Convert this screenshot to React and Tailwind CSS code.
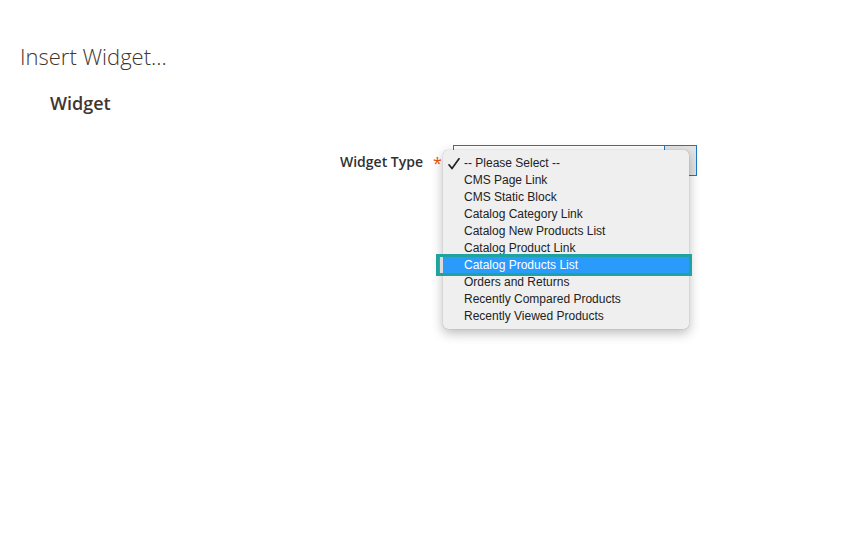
import React from "react";

const items = [
  "-- Please Select --",
  "CMS Page Link",
  "CMS Static Block",
  "Catalog Category Link",
  "Catalog New Products List",
  "Catalog Product Link",
  "Catalog Products List",
  "Orders and Returns",
  "Recently Compared Products",
  "Recently Viewed Products",
];

export default function App() {
  return (
    <div
      className="w-[851px] h-[545px] bg-white overflow-hidden"
      style={{ fontFamily: '"Open Sans", sans-serif' }}
    >
      <h1 className="pl-[20px] pt-[41px] text-[22px] leading-[30px] font-light text-[#41362f]">
        Insert Widget...
      </h1>
      <h2 className="pl-[50px] mt-[20px] text-[18px] leading-[24px] font-semibold text-[#41362f]">
        Widget
      </h2>
      <div className="mt-[30px] flex items-center">
        <label className="w-[423px] text-right text-[14px] leading-[20px] font-semibold text-[#303030] pt-[2px]">
          Widget Type
        </label>
        <span className="ml-[10px] w-[20px] text-[16px] leading-[20px] text-[#eb5202] pt-[4px]">*</span>
        <div className="relative flex w-[244px] h-[31px] border border-[#1979c3] bg-white">
          <div className="flex-1" />
          <div className="w-[32px] border-l border-[#1979c3] bg-[#e3e3e3]" />
          <div
            className="absolute left-[-11px] top-[4px] w-[246px] rounded-[5px] bg-[#efefef] pt-[5px] pb-[4px] shadow-[0_4px_12px_rgba(0,0,0,0.28),0_0_1px_rgba(0,0,0,0.35)]"
            style={{ fontFamily: '"Liberation Sans", Arial, sans-serif' }}
          >
            {items.map((it, i) => {
              const sel = i === 6;
              return (
                <div key={it} className="relative h-[17px] flex items-center pl-[21px]">
                  {sel && (
                    <div className="absolute left-[-7px] right-[-3px] top-[-3px] bottom-[-2px] border-[3px] border-[#1fa39f] bg-[#2a9bfb]">
                      <div className="absolute left-[1px] top-0 bottom-0 w-[3px] bg-[#dcdcdc]" />
                    </div>
                  )}
                  {i === 0 && (
                    <svg
                      className="absolute left-[5px] top-[3px]"
                      width="12"
                      height="12"
                      viewBox="0 0 12 12"
                    >
                      <path
                        d="M1 6.8 L4 10.5 L11 0.8"
                        fill="none"
                        stroke="#222"
                        strokeWidth="1.7"
                        strokeLinecap="round"
                        strokeLinejoin="round"
                      />
                    </svg>
                  )}
                  <span
                    className={`relative text-[12px] leading-[17px] ${
                      sel ? "text-white" : "text-[#222]"
                    }`}
                  >
                    {it}
                  </span>
                </div>
              );
            })}
          </div>
        </div>
      </div>
    </div>
  );
}
